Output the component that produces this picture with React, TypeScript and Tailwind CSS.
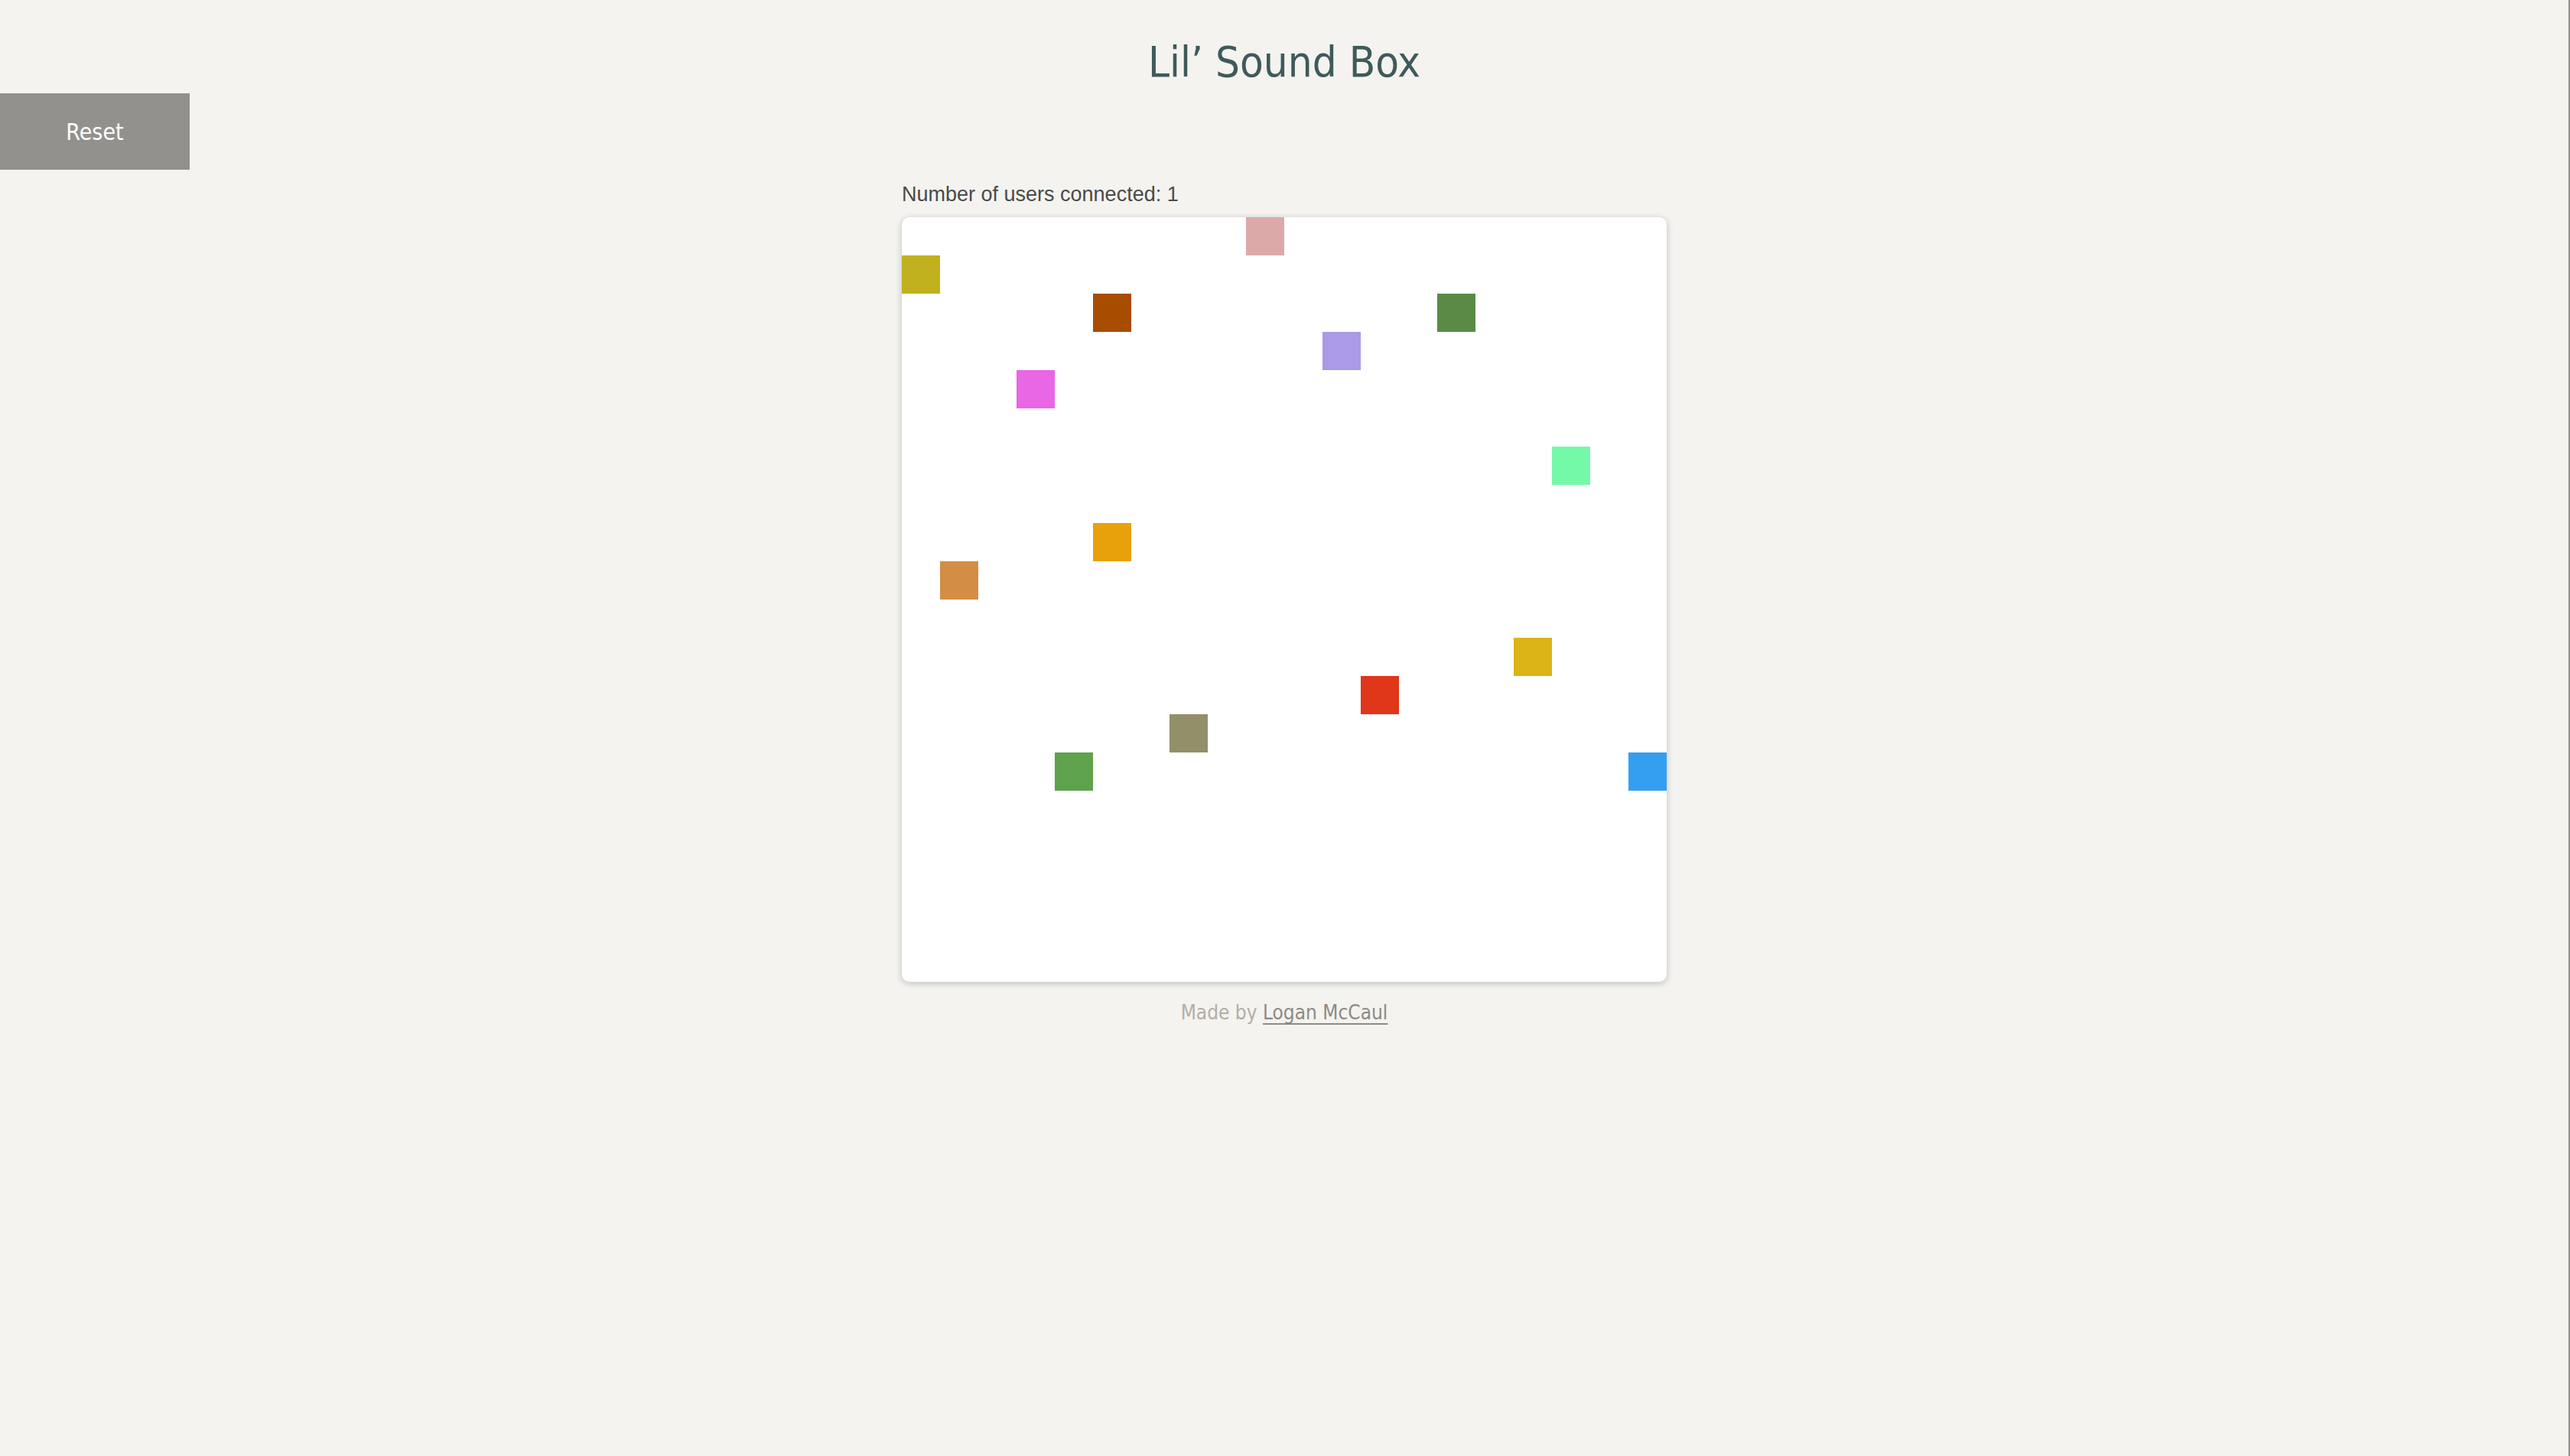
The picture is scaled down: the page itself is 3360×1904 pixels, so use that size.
import React from "react"

// cells on the 20 x 20 board, 50px each
const blocks = [
  { cell: "col-start-10 row-start-1", color: "bg-[#dca9a9]" },
  { cell: "col-start-1 row-start-2", color: "bg-[#c1b11f]" },
  { cell: "col-start-6 row-start-3", color: "bg-[#a84c00]" },
  { cell: "col-start-15 row-start-3", color: "bg-[#5b8a47]" },
  { cell: "col-start-12 row-start-4", color: "bg-[#aa9ae7]" },
  { cell: "col-start-4 row-start-5", color: "bg-[#e966e5]" },
  { cell: "col-start-18 row-start-7", color: "bg-[#74f9a9]" },
  { cell: "col-start-6 row-start-9", color: "bg-[#e9a10b]" },
  { cell: "col-start-2 row-start-10", color: "bg-[#d48d44]" },
  { cell: "col-start-17 row-start-12", color: "bg-[#dcb417]" },
  { cell: "col-start-13 row-start-13", color: "bg-[#e0361a]" },
  { cell: "col-start-8 row-start-14", color: "bg-[#938f68]" },
  { cell: "col-start-5 row-start-15", color: "bg-[#5ea24c]" },
  { cell: "col-start-20 row-start-15", color: "bg-[#349ff0]" },
]

function SoundBox() {
  return (
    <div className="grid h-[1000px] w-[1000px] grid-cols-[repeat(20,50px)] grid-rows-[repeat(20,50px)] overflow-hidden rounded-[10px] bg-white shadow-[0_2px_10px_rgba(0,0,0,0.22)]">
      {blocks.map((b, i) => (
        <div key={i} className={`${b.cell} ${b.color}`} />
      ))}
    </div>
  )
}

export default function App() {
  return (
    <div className="min-h-screen border-r-2 border-[#8f8f8f] bg-[#f4f3ef] pb-10 font-['DejaVu_Sans_Condensed','Liberation_Sans',sans-serif]">
      <h1 className="pt-[46px] text-center text-[56px] font-normal leading-[70px] text-[#3f5a5a]">
        Lil’ Sound Box
      </h1>

      <button className="mt-[6px] block h-[100px] w-[248px] bg-[#93918d] text-[30px] text-white">
        Reset
      </button>

      <div className="mx-auto w-[1000px]">
        <p className="mt-[16px] mb-[14px] font-['Liberation_Sans',Arial,sans-serif] text-[27px] leading-[32px] text-[#4a4a4a]">
          Number of users connected: 1
        </p>
        <SoundBox />
      </div>

      <p className="mt-[23px] text-center text-[26px] leading-[34px] text-[#b3aea6]">
        Made by{" "}
        <a
          href="#"
          className="text-[#8e8a85] underline decoration-[#8e8a85] decoration-[1.5px] underline-offset-[5px]"
        >
          Logan McCaul
        </a>
      </p>
    </div>
  )
}
